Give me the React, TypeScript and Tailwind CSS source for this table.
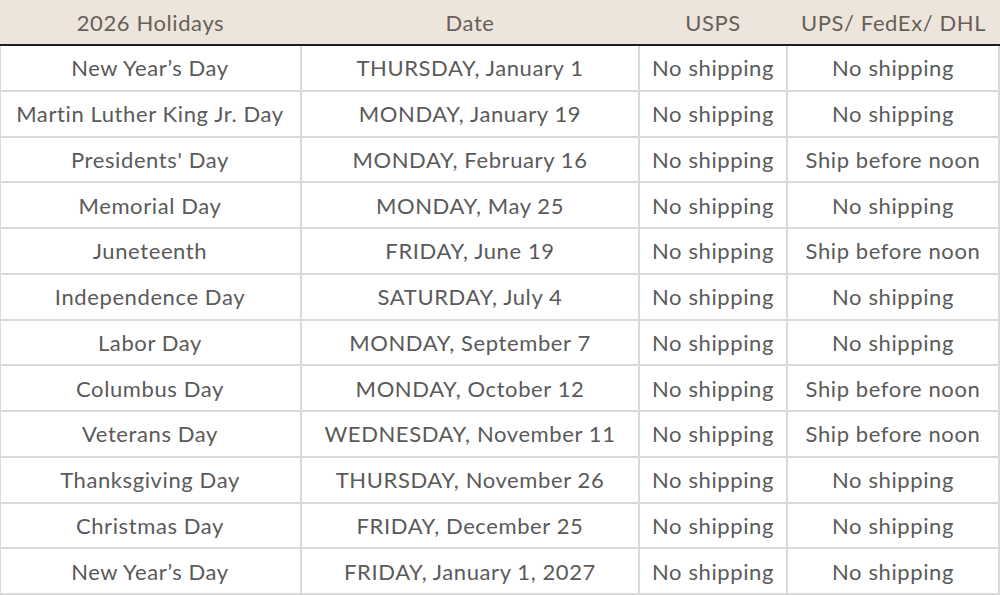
import React from 'react';

interface Holiday {
  name: string;
  date: string;
  usps: string;
  carriers: string;
}

const holidays: Holiday[] = [
  { name: 'New Year’s Day', date: 'THURSDAY, January 1', usps: 'No shipping', carriers: 'No shipping' },
  { name: 'Martin Luther King Jr. Day', date: 'MONDAY, January 19', usps: 'No shipping', carriers: 'No shipping' },
  { name: "Presidents' Day", date: 'MONDAY, February 16', usps: 'No shipping', carriers: 'Ship before noon' },
  { name: 'Memorial Day', date: 'MONDAY, May 25', usps: 'No shipping', carriers: 'No shipping' },
  { name: 'Juneteenth', date: 'FRIDAY, June 19', usps: 'No shipping', carriers: 'Ship before noon' },
  { name: 'Independence Day', date: 'SATURDAY, July 4', usps: 'No shipping', carriers: 'No shipping' },
  { name: 'Labor Day', date: 'MONDAY, September 7', usps: 'No shipping', carriers: 'No shipping' },
  { name: 'Columbus Day', date: 'MONDAY, October 12', usps: 'No shipping', carriers: 'Ship before noon' },
  { name: 'Veterans Day', date: 'WEDNESDAY, November 11', usps: 'No shipping', carriers: 'Ship before noon' },
  { name: 'Thanksgiving Day', date: 'THURSDAY, November 26', usps: 'No shipping', carriers: 'No shipping' },
  { name: 'Christmas Day', date: 'FRIDAY, December 25', usps: 'No shipping', carriers: 'No shipping' },
  { name: 'New Year’s Day', date: 'FRIDAY, January 1, 2027', usps: 'No shipping', carriers: 'No shipping' },
];

const cols = 'grid grid-cols-[301px_338px_148px_1fr]';

export default function App() {
  return (
    <div className="w-[1000px] h-[595px] bg-white font-['Lato','Liberation_Sans',sans-serif] text-[22px] tracking-[0.6px] overflow-hidden">
      <div className={`${cols} h-[46px] bg-[#ede5dc] border-b-2 border-[#1e1e1e] text-[#685f58]`}>
        <div className="flex items-center justify-center">2026 Holidays</div>
        <div className="flex items-center justify-center">Date</div>
        <div className="flex items-center justify-center">USPS</div>
        <div className="flex items-center justify-center">UPS/ FedEx/ DHL</div>
      </div>
      <div className="border-l border-r-2 border-[#dadada] text-[#5a5a5a]">
        {holidays.map((h, i) => (
          <div key={i} className={`${cols} h-[45.75px] border-b-2 border-[#dadada]`}>
            <div className="flex items-center justify-center border-r-2 border-[#dadada] -ml-px">{h.name}</div>
            <div className="flex items-center justify-center border-r-2 border-[#dadada]">{h.date}</div>
            <div className="flex items-center justify-center border-r-2 border-[#dadada]">{h.usps}</div>
            <div className="flex items-center justify-center">{h.carriers}</div>
          </div>
        ))}
      </div>
    </div>
  );
}
